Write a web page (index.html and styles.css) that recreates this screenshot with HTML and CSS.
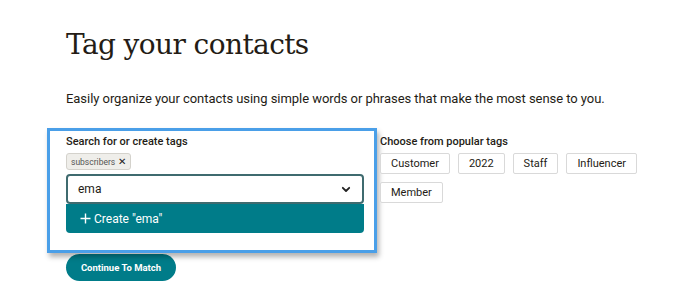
FILE: index.html
```html
<!DOCTYPE html>
<html>
<head>
<meta charset="utf-8">
<link rel="stylesheet" href="styles.css">
</head>
<body>
<main class="page">
  <h1 class="title">Tag your contacts</h1>
  <p class="lead">Easily organize your contacts using simple words or phrases that make the most sense to you.</p>
  <div class="row">
    <section class="highlight">
      <div class="label">Search for or create tags</div>
      <div class="chips">
        <span class="chip">subscribers <span class="chip-x">✕</span></span>
      </div>
      <div class="combo">
        <span class="combo-text">ema</span>
        <svg class="chev" width="10" height="7" viewBox="0 0 10 7"><path d="M1.8 1.8 L5 5 L8.2 1.8" fill="none" stroke="#222" stroke-width="1.8" stroke-linecap="round" stroke-linejoin="round"/></svg>
      </div>
      <div class="create">
        <svg class="plus" width="11" height="11" viewBox="0 0 11 11"><path d="M5.5 0.5 V10.5 M0.5 5.5 H10.5" stroke="#fff" stroke-width="1.4"/></svg>
        <span>Create "ema"</span>
      </div>
    </section>
    <section class="popular">
      <div class="label">Choose from popular tags</div>
      <div class="tags">
        <span class="tag">Customer</span>
        <span class="tag">2022</span>
        <span class="tag">Staff</span>
        <span class="tag">Influencer</span>
        <span class="tag">Member</span>
      </div>
    </section>
  </div>
  <button class="continue">Continue To Match</button>
</main>
</body>
</html>
```

FILE: styles.css
```css
* { box-sizing: border-box; }
html, body { margin: 0; padding: 0; background: #fff; }
body { font-family: Roboto, "Liberation Sans", sans-serif; color: #241c15; }
.page { padding: 23px 0 0 66px; width: 680px; height: 301px; overflow: hidden; }
.title {
  margin: 0;
  font-family: "DejaVu Serif", "Liberation Serif", serif;
  font-weight: normal;
  font-size: 28px;
  line-height: 44px;
  letter-spacing: -0.6px;
  color: #241c15;
}
.lead { margin: 22px 0 0; font-size: 13px; line-height: 20px; letter-spacing: -0.05px; color: #241c15; }
.row { display: flex; margin: 19px 0 0 -19px; align-items: flex-start; }
.highlight {
  width: 330px;
  border: 3px solid #4a9fe8;
  padding: 4px 10px 17px 16px;
  box-shadow: 2px 4px 5px rgba(0,0,0,0.3);
  background: #fff;
}
.label { font-size: 11px; font-weight: 500; line-height: 14px; color: #241c15; }
.chips { margin-top: 4px; display: flex; }
.chip {
  display: inline-flex; align-items: center; gap: 3px;
  height: 17px; padding: 0 4px 0 4px;
  background: #efeeea; border: 1px solid #d4d2cc; border-radius: 3px;
  font-size: 8.5px; color: #555;
}
.chip-x { font-size: 10px; color: #222; }
.combo {
  margin-top: 4px;
  height: 30px; border: 2px solid #3f6b6f; border-radius: 4px;
  display: flex; align-items: center; justify-content: space-between;
  padding: 0 11px 0 10px;
  font-size: 12px; color: #241c15;
}
.create {
  height: 29px; background: #007c89; border-radius: 0 0 4px 4px;
  display: flex; align-items: center; gap: 3px; padding-left: 14px;
  color: #fff; font-size: 12px;
}
.popular { margin-left: 3px; padding-top: 7px; width: 290px; }
.tags { display: flex; flex-wrap: wrap; gap: 8px 8px; margin-top: 4px; }
.tag {
  height: 21px; padding: 0 10px;
  display: inline-flex; align-items: center;
  border: 1px solid #d9d9d9; border-radius: 2px;
  font-size: 11px; color: #241c15; background: #fff;
}
.continue {
  display: block; margin-top: 1px;
  width: 110px; height: 27px; border: 0; border-radius: 14px;
  background: #007c89; color: #fff;
  font-family: Roboto, "Liberation Sans", sans-serif;
  font-size: 9.5px; font-weight: 700;
}
```
